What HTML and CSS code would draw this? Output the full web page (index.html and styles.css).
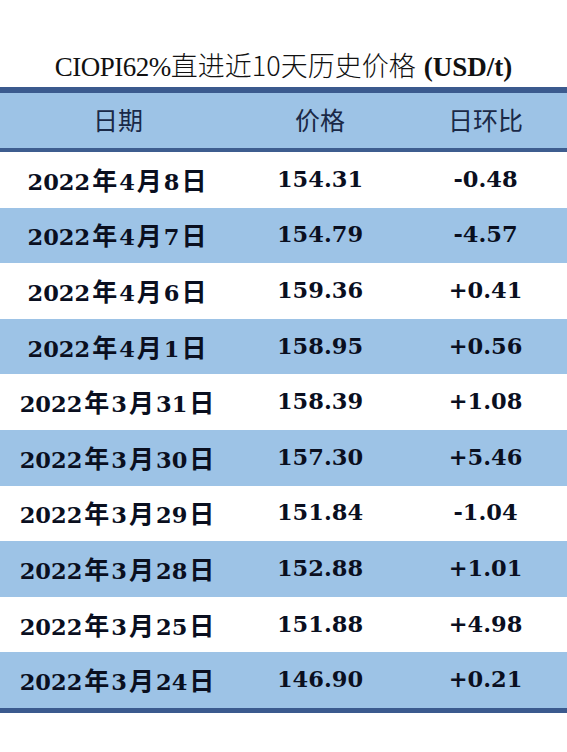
FILE: index.html
```html
<!DOCTYPE html>
<html lang="zh">
<head>
<meta charset="utf-8">
<title>CIOPI62%直进近10天历史价格</title>
<link rel="stylesheet" href="styles.css">
</head>
<body>
<div class="page">
  <h1 class="title"><span class="t-latin">CIOPI62%</span><span class="t-cjk">直进近10天历史价格</span> <span class="t-bold">(USD/t)</span></h1>
  <div class="table">
    <div class="head">
      <div>日期</div><div>价格</div><div>日环比</div>
    </div>
    <div class="row">
      <div class="date">2022<span class="cj">年</span>4<span class="cj">月</span>8<span class="cj">日</span></div><div class="num">154.31</div><div class="num">-0.48</div>
    </div>
    <div class="row alt">
      <div class="date">2022<span class="cj">年</span>4<span class="cj">月</span>7<span class="cj">日</span></div><div class="num">154.79</div><div class="num">-4.57</div>
    </div>
    <div class="row">
      <div class="date">2022<span class="cj">年</span>4<span class="cj">月</span>6<span class="cj">日</span></div><div class="num">159.36</div><div class="num">+0.41</div>
    </div>
    <div class="row alt">
      <div class="date">2022<span class="cj">年</span>4<span class="cj">月</span>1<span class="cj">日</span></div><div class="num">158.95</div><div class="num">+0.56</div>
    </div>
    <div class="row">
      <div class="date">2022<span class="cj">年</span>3<span class="cj">月</span>31<span class="cj">日</span></div><div class="num">158.39</div><div class="num">+1.08</div>
    </div>
    <div class="row alt">
      <div class="date">2022<span class="cj">年</span>3<span class="cj">月</span>30<span class="cj">日</span></div><div class="num">157.30</div><div class="num">+5.46</div>
    </div>
    <div class="row">
      <div class="date">2022<span class="cj">年</span>3<span class="cj">月</span>29<span class="cj">日</span></div><div class="num">151.84</div><div class="num">-1.04</div>
    </div>
    <div class="row alt">
      <div class="date">2022<span class="cj">年</span>3<span class="cj">月</span>28<span class="cj">日</span></div><div class="num">152.88</div><div class="num">+1.01</div>
    </div>
    <div class="row">
      <div class="date">2022<span class="cj">年</span>3<span class="cj">月</span>25<span class="cj">日</span></div><div class="num">151.88</div><div class="num">+4.98</div>
    </div>
    <div class="row alt">
      <div class="date">2022<span class="cj">年</span>3<span class="cj">月</span>24<span class="cj">日</span></div><div class="num">146.90</div><div class="num">+0.21</div>
    </div>
  </div>
</div>
</body>
</html>
```

FILE: styles.css
```css
html, body {
  margin: 0;
  padding: 0;
  background: #ffffff;
}

.page {
  width: 567px;
  height: 752px;
  overflow: hidden;
}

.title {
  margin: 0;
  padding-top: 49px;
  height: 32px;
  line-height: 32px;
  margin-bottom: 6px;
  text-align: center;
  font-weight: normal;
  color: #111111;
  white-space: nowrap;
}

.t-latin {
  font-family: "Liberation Serif", serif;
  font-size: 27px;
  letter-spacing: -0.5px;
}

.t-cjk {
  font-family: "Noto Sans CJK SC", sans-serif;
  font-weight: 300;
  font-size: 27px;
}

.t-bold {
  font-family: "Liberation Serif", serif;
  font-weight: bold;
  font-size: 27px;
}

.table {
  border-top: 6px solid #3b5a8e;
  border-bottom: 5px solid #3b5a8e;
}

.head,
.row {
  display: grid;
  grid-template-columns: 236px 168px 1fr;
  align-items: center;
  text-align: center;
  box-sizing: border-box;
}

.head {
  height: 59px;
  padding-bottom: 3px;
  background: #9dc3e6;
  border-bottom: 4px solid #3e5d8f;
  font-family: "Noto Sans CJK SC", sans-serif;
  font-size: 25px;
  color: #1a2947;
}

.row {
  height: 55.6px;
  padding-bottom: 2px;
  background: #ffffff;
  color: #0a0f1f;
  font-family: "DejaVu Serif", "Noto Sans CJK SC", serif;
  font-weight: bold;
  font-size: 22.5px;
}

.row.alt {
  background: #9dc3e6;
}

.date {
  white-space: nowrap;
}

.cj {
  font-family: "Noto Sans CJK SC", sans-serif;
  font-weight: 700;
  font-size: 25px;
  margin: 0 2px;
}

.num {
  white-space: nowrap;
}
```
